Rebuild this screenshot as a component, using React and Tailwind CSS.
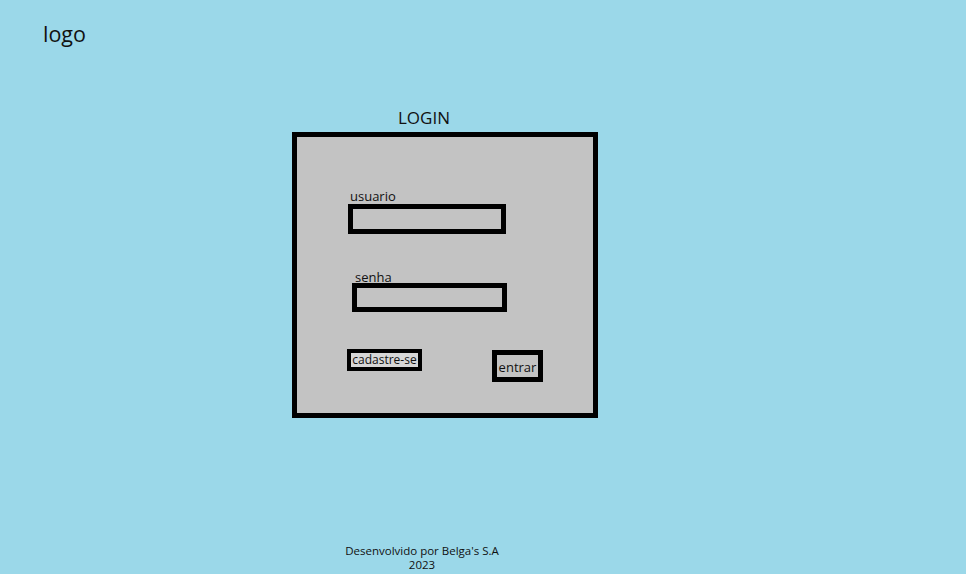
export default function App() {
  return (
    <div className="w-full h-[574px] bg-[#9bd8e9] flex flex-col text-[#111] font-['Open_Sans','Liberation_Sans',sans-serif] overflow-hidden">
      <div className="pl-[43px] pt-[20px] h-[48px] text-[21.5px] leading-[28px]">logo</div>

      <div className="pl-[398px] mt-[58px] h-[24px] text-[17px] leading-[24px]">LOGIN</div>

      <div className="ml-[292px] mt-[2px] w-[306px] h-[286px] border-[5px] border-black bg-[#c3c3c3] flex flex-col">
        <div className="ml-[53px] mt-[52px] h-[15px] text-[13px] leading-[15px]">usuario</div>
        <div className="ml-[51px] w-[158px] h-[30px] border-[5px] border-black" />

        <div className="ml-[58px] mt-[36px] h-[15px] text-[13px] leading-[15px]">senha</div>
        <div className="ml-[55px] -mt-[2px] w-[155px] h-[29px] border-[5px] border-black" />

        <div className="mt-[37px] flex items-start">
          <div className="ml-[50px] w-[75px] h-[22px] border-[4px] border-black flex items-center justify-center">
            <span className="bg-[#d6d6d6] px-[1px] text-[12px] leading-[14px]">cadastre-se</span>
          </div>
          <div className="ml-[70px] mt-[1px] w-[51px] h-[32px] border-[5px] border-black flex items-center justify-center pt-[2px] text-[13px] leading-[16px]">
            entrar
          </div>
        </div>
      </div>

      <div className="mt-auto mb-[2px] ml-[340px] w-[164px] text-center text-[11.5px] leading-[14px]">
        <div>Desenvolvido por Belga's S.A</div>
        <div>2023</div>
      </div>
    </div>
  );
}
